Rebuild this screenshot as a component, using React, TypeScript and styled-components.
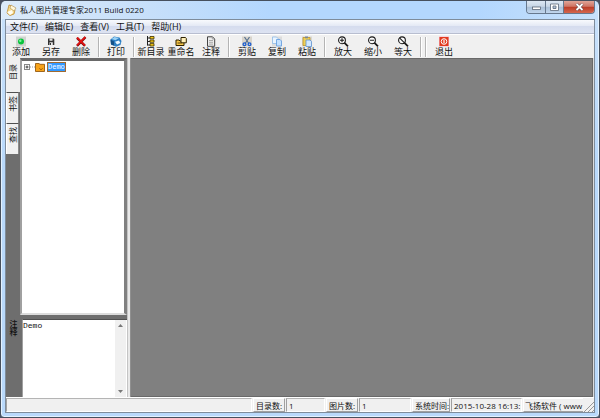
import React from "react";
import styled, { createGlobalStyle } from "styled-components";

const Global = createGlobalStyle`
  *, *::before, *::after { box-sizing: border-box; }
  body { margin: 0; background: #4a5262; }
  button, input, textarea { font: inherit; color: inherit; margin: 0; padding: 0; border: 0; background: none; border-radius: 0; }
`;

const Window = styled.main`
  height: 100vh;
  display: flex;
  flex-direction: column;
  padding: 0 4px 4px;
  border: 1px solid #46505e;
  border-radius: 6px 6px 4px 4px;
  background: linear-gradient(to bottom, #c9e1fa, #b9d9fb 160px, #b9d9fb);
  box-shadow: inset 0 0 0 1px #e4f2ff;
  font: 8px/12px "Open Sans", "Noto Sans CJK SC", sans-serif;
  color: #111;
  overflow: hidden;
`;

const TitleBar = styled.header`
  flex: none;
  height: 18px;
  display: flex;
  align-items: center;
  gap: 3px;
  margin: 0 -3px;
  padding: 0 3px 0 4px;
  background: linear-gradient(to right, #dcebfa, #c6dffa 25%, #b3d7fe 45%, #b3d7fe 80%, #c8e1fb);
`;

const Title = styled.h1`
  flex: 1;
  margin: 0;
  font: inherit;
  white-space: nowrap;
`;

const Caption = styled.div`
  display: flex;
  align-self: flex-start;
  height: 13px;
  border: 1px solid #66788e;
  border-top: 0;
  border-radius: 0 0 4px 4px;
  overflow: hidden;
`;

const CaptionButton = styled.button<{ $close?: boolean }>`
  width: ${(p) => (p.$close ? 31 : 18)}px;
  display: flex;
  align-items: center;
  justify-content: center;
  background: ${(p) =>
    p.$close
      ? "linear-gradient(#e0a598, #cf7565 45%, #bb3c27 50%, #d4664d)"
      : "linear-gradient(#dde8f4, #c8d6e6 45%, #aabfd6 50%, #c0d6ee)"};
  & + & { border-left: 1px solid #66788e; }
`;

const Client = styled.div`
  flex: 1;
  min-height: 0;
  display: flex;
  flex-direction: column;
  border: 1px solid #7e8c9b;
  background: #f0f0f0;
`;

const MenuBar = styled.nav`
  flex: none;
  height: 14px;
  display: flex;
  align-items: center;
  padding-left: 4px;
  gap: 7px;
  font-size: 9px;
  background: linear-gradient(#f8fafd, #e4e9f5 45%, #d5dcee 50%, #dde3f2);
  border-bottom: 1px solid #b8bed0;
`;

const MenuItem = styled.button`
  white-space: nowrap;
`;

const ToolBar = styled.div`
  flex: none;
  height: 24px;
  display: flex;
  align-items: stretch;
  border-top: 1px solid #fff;
`;

const Tool = styled.button`
  width: 30px;
  flex: none;
  display: flex;
  flex-direction: column;
  align-items: center;
  font-size: 9px;
  line-height: 10px;
  white-space: nowrap;
  padding-top: 1px;
  svg { flex: none; }
`;

const Divider = styled.span<{ $wide?: boolean }>`
  flex: none;
  width: ${(p) => (p.$wide ? 6 : 5)}px;
  padding: 2px 2px 1px;
  &::before {
    content: "";
    display: block;
    width: 2px;
    height: 100%;
    border-left: 1px solid #b4b4b4;
    border-right: 1px solid #fff;
  }
`;

const Body = styled.div`
  flex: 1;
  min-height: 0;
  display: flex;
  background: #808080;
  border-right: 1px solid #dcdcdc;
`;

const Side = styled.aside`
  flex: none;
  width: 121px;
  display: flex;
  flex-direction: column;
  background: #6e6e6e;
`;

const Splitter = styled.div`
  flex: none;
  width: 4px;
  background: #e8e8e8;
  border-left: 1px solid #c4c4c4;
  border-right: 1px solid #909090;
`;

const Canvas = styled.section`
  flex: 1;
  background: #808080;
  border: 1px solid #696969;
  border-left: 0;
`;

const Upper = styled.div`
  flex: 1;
  min-height: 0;
  display: flex;
`;

const Tabs = styled.div`
  flex: none;
  width: 14px;
  display: flex;
  flex-direction: column;
`;

const Tab = styled.button<{ $active?: boolean }>`
  flex: none;
  display: flex;
  align-items: center;
  justify-content: center;
  height: ${(p) => (p.$active ? 34 : 31)}px;
  width: ${(p) => (p.$active ? 14 : 13)}px;
  padding-bottom: ${(p) => (p.$active ? 7 : 9)}px;
  background: #f0f0f0;
  border: solid;
  border-width: ${(p) => (p.$active ? "0" : "1px 1px 0 1px")};
  border-color: #505050 #8a8a8a #505050 #fff;
`;

const SideText = styled.span`
  writing-mode: vertical-rl;
  text-orientation: sideways;
  transform: rotate(180deg);
  line-height: 10px;
`;

const TreePanel = styled.div`
  flex: 1;
  min-width: 0;
  border: solid;
  border-width: 3px 3px 2px 2px;
  border-color: #696969 #808080 #dcdcdc #a0a0a0;
  background: #fff;
  padding: 0 0 0 2px;
`;

const TreeRow = styled.div`
  display: flex;
  align-items: center;
  height: 12px;
  font: 7px/8px "Liberation Mono", monospace;
`;

const Selected = styled.span`
  margin-left: 1px;
  color: #fff;
  background: #3399ff;
  border: 1px solid #a06a30;
`;

const Lower = styled.div`
  flex: none;
  height: 82px;
  display: flex;
  padding-top: 4px;
`;

const LowerLabel = styled.label`
  width: 16px;
  flex: none;
  padding: 1px 3px 0 0;
  font-weight: 500;
  line-height: 12px;
  writing-mode: vertical-rl;
`;

const Memo = styled.div`
  flex: 1;
  min-width: 0;
  display: flex;
  border-top: 1px solid #505050;
  border-left: 1px solid #a0a0a0;
  background: #fff;
`;

const MemoText = styled.textarea`
  flex: 1;
  min-width: 0;
  resize: none;
  outline: 0;
  padding: 1px 0;
  font: 8px/10px "Liberation Mono", monospace;
  overflow: hidden;
`;

const ScrollBar = styled.div`
  flex: none;
  width: 12px;
  display: flex;
  flex-direction: column;
  justify-content: space-between;
  align-items: center;
  padding: 4px 0;
  background: #f0f0f0;
  border-right: 1px solid #fff;
  button { display: flex; }
`;

const StatusBar = styled.footer`
  flex: none;
  height: 15px;
  display: flex;
  align-items: stretch;
  border-top: 1px solid #fff;
  gap: 1px;
  white-space: nowrap;
  overflow: hidden;
`;

const StatusCell = styled.span<{ $width?: number; $raised?: boolean }>`
  flex: ${(p) => (p.$width ? `0 0 ${p.$width}px` : "1 1 0")};
  min-width: 0;
  padding-left: 2px;
  overflow: hidden;
  border: 1px solid;
  border-color: ${(p) => (p.$raised ? "#fff #a0a0a0 #a0a0a0 #fff" : "#b4b4b4 #fff #fff #a0a0a0")};
  line-height: 13px;
`;

const LastCell = styled(StatusCell)`
  border-right: 0;
  padding-left: 1px;
`;

const Grip = styled.svg`
  flex: none;
  align-self: flex-end;
`;

type IconProps = { children: React.ReactNode };
const Icon = ({ children }: IconProps) => (
  <svg width="12" height="11" viewBox="0 0 12 11" fill="none" aria-hidden="true">
    {children}
  </svg>
);

const AddIcon = () => (
  <Icon>
    <rect x="1" y="0.5" width="10" height="10" fill="#cfd3cf" />
    <circle cx="6" cy="5.5" r="3" fill="#08c43c" />
    <circle cx="5.3" cy="4.8" r="1.2" fill="#7df59a" />
  </Icon>
);
const SaveIcon = () => (
  <Icon>
    <path d="M3 2.5h5.5l.8.8V9H3z" fill="#333" />
    <path d="M4.5 2.5h3v2.2h-3zM4.5 6.3h3.3V9H4.5z" fill="#e8e8e8" />
    <path d="M5 7h1v2H5z" fill="#333" />
  </Icon>
);
const DeleteIcon = () => (
  <Icon>
    <path d="M2 1.8l8 8M10.5 1.2L2 9.8" stroke="#7a0d0d" strokeWidth="2.4" />
    <path d="M2 1.5l8 8M10.3 1L2 9.3" stroke="#e81010" strokeWidth="1.6" />
  </Icon>
);
const PrintIcon = () => (
  <Icon>
    <path d="M.5 3.5L4 .5l5.5 1L11.5 5l-1 4L6 10.8 1 8.5z" fill="#2d7fc4" />
    <path d="M1.5 3l3-2L9 2 5.500 4.200z" fill="#9bd2f5" />
    <path d="M5 5.800l4-1.300L10.300 7 7 8.500z" fill="#eef8ff" />
    <path d="M.5 3.500l3.500 2v4L1 8.500z" fill="#135087" />
  </Icon>
);
const NewDirIcon = () => (
  <Icon>
    <path d="M2.5 0v9.5M2.5 2H6M2.5 5.5H6M2.5 9H6" stroke="#222" />
    <path d="M5 .5h4v2.3H5zM5 4h4v2.3H5zM5 7.6h4V10H5z" fill="#f6c915" stroke="#3b3000" strokeWidth=".8" />
  </Icon>
);
const RenameIcon = () => (
  <Icon>
    <path d="M1 4h3l1 1h4v4.5H1z" fill="#f5c64a" stroke="#2e2200" />
    <path d="M6 1.5h4.5l.8 1v4.3H6z" fill="#fff0b8" stroke="#2e2200" />
    <path d="M2.5 7h4" stroke="#2e2200" strokeWidth=".8" />
  </Icon>
);
const NoteIcon = () => (
  <Icon>
    <path d="M2.5 .8h5L9.700 3v7.300H2.500z" fill="#ececec" stroke="#444" />
    <path d="M7.300 .8V3h2.400M4 4.500h4M4 6.300h4M4 8.100h4" stroke="#999" strokeWidth=".8" />
  </Icon>
);
const CutIcon = () => (
  <Icon>
    <rect x="1" y="0.5" width="10" height="10" fill="#d8d4cc" />
    <path d="M3.5 1l4 6M8.5 1l-4 6" stroke="#56708e" strokeWidth="1.2" />
    <circle cx="3.5" cy="8.2" r="1.4" stroke="#1d5fd0" strokeWidth="1.3" />
    <circle cx="8.5" cy="8.2" r="1.4" stroke="#1d5fd0" strokeWidth="1.3" />
  </Icon>
);
const CopyIcon = () => (
  <Icon>
    <rect x="1" y="0.5" width="10" height="10" fill="#dcdcdc" />
    <path d="M1.5 1h4L7 2.500v5H1.500z" fill="#eaf5ff" stroke="#8fbbe8" strokeWidth=".8" />
    <path d="M5.500 3.500H9L10.500 5v5h-5z" fill="#c4e1ff" stroke="#5f9bdd" strokeWidth=".8" />
  </Icon>
);
const PasteIcon = () => (
  <Icon>
    <rect x="1" y="0.5" width="10" height="10" fill="#d8d8d4" />
    <path d="M2 1.500h7v8H2z" fill="#efcf55" stroke="#bf9427" strokeWidth=".8" />
    <path d="M4 .6h3v1.600H4z" fill="#7b8794" />
    <path d="M5 4h4l1.500 1.500v5H5z" fill="#d2e8ff" stroke="#5e92d0" strokeWidth=".8" />
  </Icon>
);
const LensIcon = ({ mark }: { mark: string }) => (
  <Icon>
    <circle cx="5" cy="4.300" r="3.400" fill="#fafafa" stroke="#1a1a1a" strokeWidth="1.1" />
    <path d="M7.500 6.800l3.500 3.500" stroke="#1a1a1a" strokeWidth="1.7" />
    <path d={mark} stroke="#1a1a1a" strokeWidth="1.1" />
  </Icon>
);
const ExitIcon = () => (
  <Icon>
    <rect x="1" y="0.5" width="10" height="10" fill="#f7b7c8" />
    <rect x="1.5" y="1" width="9" height="9" fill="#e23a1e" />
    <circle cx="6" cy="5.5" r="2.8" stroke="#fff" strokeWidth="1" />
    <path d="M6 3.800v3.400" stroke="#fff" strokeWidth="1.2" />
  </Icon>
);

const AppIcon = () => (
  <svg width="11" height="12" viewBox="0 0 11 12" aria-hidden="true">
    <path d="M3 1l3 1 3 4-1 4-4 1.500L1 9l1-4z" fill="#f7dc8a" stroke="#c08a2c" strokeWidth=".8" />
    <path d="M5 1l5 3-2 3-4-3z" fill="#fff6d6" stroke="#a98a50" strokeWidth=".6" />
    <path d="M1 8l5-2 1 3-3 2z" fill="#fffdf2" />
  </svg>
);

type ToolItem = { label: string; icon: React.ReactNode } | "sep" | "wide";

const tools: ToolItem[] = [
  { label: "添加", icon: <AddIcon /> },
  { label: "另存", icon: <SaveIcon /> },
  { label: "删除", icon: <DeleteIcon /> },
  "sep",
  { label: "打印", icon: <PrintIcon /> },
  "sep",
  { label: "新目录", icon: <NewDirIcon /> },
  { label: "重命名", icon: <RenameIcon /> },
  { label: "注释", icon: <NoteIcon /> },
  "wide",
  { label: "剪贴", icon: <CutIcon /> },
  { label: "复制", icon: <CopyIcon /> },
  { label: "粘贴", icon: <PasteIcon /> },
  "wide",
  { label: "放大", icon: <LensIcon mark="M3 4.300h4M5 2.300v4" /> },
  { label: "缩小", icon: <LensIcon mark="M3 4.300h4" /> },
  { label: "等大", icon: <LensIcon mark="M2.500 1.800l5 5" /> },
  "sep",
  "wide",
  { label: "退出", icon: <ExitIcon /> },
];

const menus = ["文件(F)", "编辑(E)", "查看(V)", "工具(T)", "帮助(H)"];
const tabs = ["目录", "书签", "查找"];

export default function App() {
  return (
    <>
      <Global />
      <Window>
        <TitleBar>
          <AppIcon />
          <Title>私人图片管理专家2011 Build 0220</Title>
          <Caption>
            <CaptionButton aria-label="最小化">
              <svg width="9" height="8" viewBox="0 0 9 8">
                <rect x=".5" y="4" width="8" height="2.5" fill="#fff" stroke="#5c6878" strokeWidth=".8" />
              </svg>
            </CaptionButton>
            <CaptionButton aria-label="最大化">
              <svg width="9" height="8" viewBox="0 0 9 8">
                <path d="M.5 1h8v6.500h-8zM3 3v2.500h3V3z" fill="#fff" fillRule="evenodd" stroke="#5c6878" strokeWidth=".8" />
              </svg>
            </CaptionButton>
            <CaptionButton $close aria-label="关闭">
              <svg width="9" height="8" viewBox="0 0 9 8">
                <path d="M1.500 1l6 6M7.500 1l-6 6" stroke="#5b4048" strokeWidth="3" />
                <path d="M1.500 1l6 6M7.500 1l-6 6" stroke="#fff" strokeWidth="1.8" />
              </svg>
            </CaptionButton>
          </Caption>
        </TitleBar>
        <Client>
          <MenuBar>
            {menus.map((m) => (
              <MenuItem key={m}>{m}</MenuItem>
            ))}
          </MenuBar>
          <ToolBar role="toolbar">
            {tools.map((t, i) =>
              typeof t === "string" ? (
                <Divider key={i} $wide={t === "wide"} />
              ) : (
                <Tool key={i}>
                  {t.icon}
                  {t.label}
                </Tool>
              )
            )}
          </ToolBar>
          <Body>
            <Side>
              <Upper>
                <Tabs role="tablist">
                  {tabs.map((t, i) => (
                    <Tab key={t} role="tab" aria-selected={i === 0} $active={i === 0}>
                      <SideText>{t}</SideText>
                    </Tab>
                  ))}
                </Tabs>
                <TreePanel role="tree">
                  <TreeRow role="treeitem" aria-selected="true">
                    <svg width="22" height="10" viewBox="0 0 22 10" aria-hidden="true">
                      <rect x=".5" y="2.5" width="5" height="5" fill="#fff" stroke="#888" />
                      <path d="M1.500 5h3M3 3.500v3" stroke="#222" strokeWidth=".8" />
                      <path d="M6 5h5" stroke="#999" strokeDasharray="1 1" />
                      <path d="M11.500 1.500H15l1 .8h4.500v7.200h-9z" fill="#f7a31a" stroke="#8a4b00" strokeWidth=".8" />
                      <path d="M15.500 6.300l1.500 1.500 1.500-1.500" stroke="#7a3d00" strokeWidth=".8" fill="none" />
                    </svg>
                    <Selected>Demo</Selected>
                  </TreeRow>
                </TreePanel>
              </Upper>
              <Lower>
                <LowerLabel htmlFor="memo">注释</LowerLabel>
                <Memo>
                  <MemoText id="memo" defaultValue="Demo" />
                  <ScrollBar>
                    <button aria-label="向上滚动">
                      <svg width="5" height="3" viewBox="0 0 5 3"><path d="M0 3l2.500-3L5 3z" fill="#777" /></svg>
                    </button>
                    <button aria-label="向下滚动">
                      <svg width="5" height="3" viewBox="0 0 5 3"><path d="M0 0l2.500 3L5 0z" fill="#777" /></svg>
                    </button>
                  </ScrollBar>
                </Memo>
              </Lower>
            </Side>
            <Splitter />
            <Canvas />
          </Body>
          <StatusBar>
            <StatusCell />
            <StatusCell $width={32} $raised>目录数:</StatusCell>
            <StatusCell $width={39}>1</StatusCell>
            <StatusCell $width={32} $raised>图片数:</StatusCell>
            <StatusCell $width={52}>1</StatusCell>
            <StatusCell $width={38} $raised>系统时间:</StatusCell>
            <StatusCell $width={71}>2015-10-28 16:13:</StatusCell>
            <LastCell $width={60} $raised>飞扬软件 ( www</LastCell>
            <Grip width="10" height="10" viewBox="0 0 10 10" aria-hidden="true">
              <path d="M0 10L10 0M4 10l6-6M8 10l2-2" stroke="#999" />
            </Grip>
          </StatusBar>
        </Client>
      </Window>
    </>
  );
}
